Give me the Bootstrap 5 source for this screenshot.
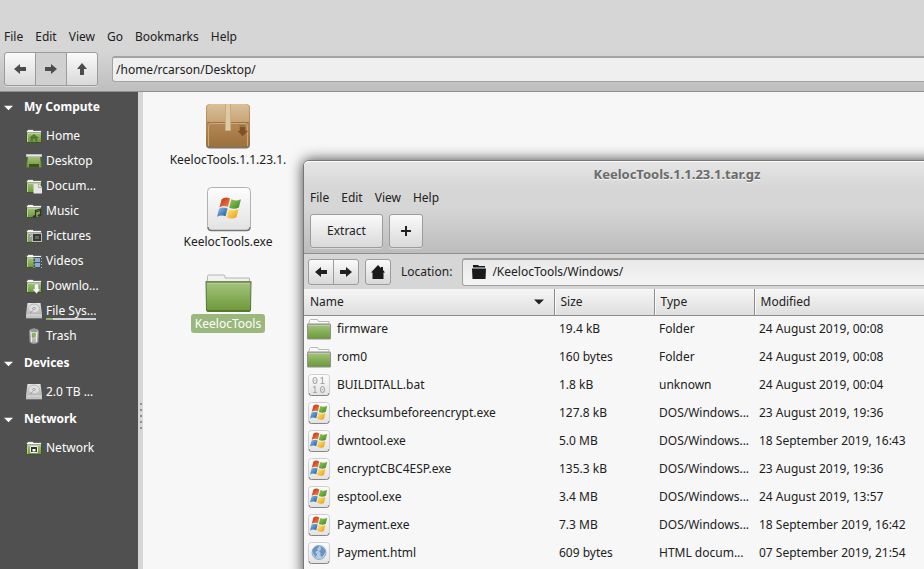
<!DOCTYPE html>
<html lang="en">
<head>
<meta charset="utf-8">
<meta name="viewport" content="width=device-width, initial-scale=1">
<title>Desktop - file manager</title>
<link href="https://cdn.jsdelivr.net/npm/bootstrap@5.3.0/dist/css/bootstrap.min.css" rel="stylesheet">
<style>
  body { font-family: "Noto Sans", sans-serif; font-size: 12px; line-height: 20px; color: #212121; background: #f7f7f7; }
  a, a:hover { color: inherit; text-decoration: none; }
  .fm-top { background: linear-gradient(#d6d6d6 55%, #bebebe); border-bottom: 1px solid #8f8f8f; padding: 27px 0 5px; }
  .menu-bar { gap: 12px; padding: 0 4px; }
  .fm-tools { padding: 5px 0 0 4px; gap: 14px; }
  .ui-btn { font-size: 12px; line-height: 20px; color: #212121; border: 1px solid #9c9c9c; border-radius: 3px; background: linear-gradient(#fafafa, #d9d9d9); padding: 0; box-shadow: 0 1px 0 #d9d9d9; }
  .ui-btn svg { display: block; margin: auto; }
  .btn-nav { width: 32px; height: 34px; color: #4c4c4c; }
  .btn-group > .ui-btn + .ui-btn { margin-left: -1px; }
  .btn-nav:disabled { background: #d0d0d0; opacity: 1; border-color: #9c9c9c; color: #4c4c4c; }
  .path-field { font-size: 12px; line-height: 20px; height: 26px; color: #212121; background: #efefef; border: 1px solid #a3a3a3; border-width: 2px 0 1px 1px; border-radius: 3px 0 0 3px; padding: 0 3px; }
  .side { width: 138px; background: #505050; color: #fff; }
  .side-head { height: 31px; font-size: 12px; gap: 11px; padding-left: 4px; }
  .side-item { height: 25px; gap: 4px; padding-left: 26px; }
  .usage { height: 2px; background: #d0d3d6; border-radius: 0; margin: -3px 0 1px; }
  .usage .progress-bar { background: #8fb06c; }
  .splitter { width: 5px; background: #d6d6d6; padding-bottom: 140px; gap: 4px; }
  .splitter i { width: 2px; height: 2px; background: #8e8e8e; }
  .icon-col { width: 170px; padding-top: 10px; gap: 15px; }
  .file-name { height: 19px; line-height: 19px; padding: 0 4px; border-radius: 3px; }
  .file-name.chosen { background: #9ab87c; color: #fff; }
  .arc-win { position: absolute; left: 303px; right: -127px; top: 160px; bottom: -10px; background: #f7f7f7; border: 1px solid #777; border-radius: 6px 6px 0 0; box-shadow: 0 0 14px rgba(0,0,0,.75); }
  .arc-top { background: linear-gradient(#e6e6e6, #d6d6d6 30%, #d6d6d6 50%, #bcbcbc); border-bottom: 1px solid #8f8f8f; border-radius: 5px 5px 0 0; box-shadow: inset 0 1px 0 #fafafa; padding: 2px 0 5px; }
  .arc-title { font-size: 13px; line-height: 22px; font-weight: 700; color: #6b6b6b; text-shadow: 0 1px 0 #f4f4f4; margin: 0; }
  .arc-menu { padding: 3px 6px 0; gap: 12px; }
  .arc-tools { padding: 6px 6px 0; gap: 6px; }
  .arc-tools .ui-btn { height: 34px; }
  .btn-extract { width: 73px; }
  .btn-add { width: 34px; }
  .arc-loc { background: #d6d6d6; padding: 4px 0 4px 4px; height: 35px; gap: 6px; }
  .arc-loc .ui-btn { width: 26px; height: 26px; }
  .arc-loc label { padding: 0 4px; }
  .loc-box { height: 28px; background: linear-gradient(#e8e8e8, #f5f5f5); border: 1px solid #a0a0a0; border-top-width: 2px; border-radius: 3px; padding-left: 8px; gap: 5px; }
  .loc-box input { font-size: 12px; line-height: 20px; color: #212121; background: none; border: 0; padding: 0; min-width: 0; }
  .listing { table-layout: fixed; width: 100%; }
  .listing th { height: 26px; padding: 0 6px; font-weight: 400; background: linear-gradient(#f6f6f6, #dedede); border-bottom: 1px solid #8c8c8c; }
  .listing th + th { box-shadow: inset 1px 0 0 #fafafa; }
  .listing th:not(:last-child) { border-right: 1px solid #8c8c8c; }
  .listing td { height: 28px; padding: 0 0 1px 5px; white-space: nowrap; }
  .listing td:first-child { padding-left: 3px; }
  .file-cell { gap: 6px; }
  .w-name { width: 250px; } .w-small { width: 100px; }
</style>
<script src="https://cdn.jsdelivr.net/npm/bootstrap@5.3.0/dist/js/bootstrap.bundle.min.js"></script>
</head>
<body class="vh-100 overflow-hidden">
<svg width="0" height="0" class="position-absolute" aria-hidden="true">
  <defs>
    <linearGradient id="gr" x1="0" y1="0" x2="0" y2="1"><stop offset="0" stop-color="#a4c47c"/><stop offset="1" stop-color="#6c9838"/></linearGradient>
    <linearGradient id="paper" x1="0" y1="0" x2="0" y2="1"><stop offset="0" stop-color="#fdfdfd"/><stop offset="1" stop-color="#e2e2e2"/></linearGradient>
    <linearGradient id="metal" x1="0" y1="0" x2="0" y2="1"><stop offset="0" stop-color="#e6e6e6"/><stop offset="1" stop-color="#a8a8a8"/></linearGradient>
    <linearGradient id="box" x1="0" y1="0" x2="0" y2="1"><stop offset="0" stop-color="#c49b69"/><stop offset="1" stop-color="#9c703b"/></linearGradient>
    <linearGradient id="lid" x1="0" y1="0" x2="0" y2="1"><stop offset="0" stop-color="#dcc09a"/><stop offset="1" stop-color="#c7a475"/></linearGradient>
    <linearGradient id="wr" x1="0" y1="0" x2="1" y2="1"><stop offset="0" stop-color="#c22a10"/><stop offset="1" stop-color="#f08a50"/></linearGradient>
    <linearGradient id="wg" x1="0" y1="0" x2="1" y2="1"><stop offset="0" stop-color="#9cc860"/><stop offset="1" stop-color="#3c8a1c"/></linearGradient>
    <linearGradient id="wb" x1="0" y1="0" x2="1" y2="1"><stop offset="0" stop-color="#8fc2ea"/><stop offset="1" stop-color="#1f5699"/></linearGradient>
    <linearGradient id="wy" x1="0" y1="0" x2="1" y2="1"><stop offset="0" stop-color="#fdea7c"/><stop offset="1" stop-color="#eb9a10"/></linearGradient>

    <symbol id="s-folder" viewBox="0 0 16 16"><path d="M.5 5V2.500h1l.5-1h5l.5 1h8V5z" fill="#f4f4f4" stroke="#3f3f3f" stroke-width=".6"/><path d="M.5 4.500h15V14.500H.5z" fill="url(#gr)" stroke="#42512f"/><path d="M1 4h14" stroke="#fff"/><path d="M1.500 6v8M2 5.500h13" stroke="#b8d498" fill="none"/></symbol>
    <symbol id="s-desktop" viewBox="0 0 16 16"><path d="M1.500 3h13l1 11.500H.5z" fill="url(#gr)" stroke="#55703a"/><path d="M0 1h16v3H0z" fill="#bdbdbd"/><path d="M1 2h14v1H1z" fill="#e9e9e9"/><path d="M3 11h10v3.500H3z" fill="#3d5123"/></symbol>
    <symbol id="s-disk" viewBox="0 0 16 16"><path d="M1.500 0h13L16 11v4H0v-4z" fill="url(#metal)"/><path d="M0 11.500h16V15H0z" fill="#c2c2c2"/><ellipse cx="8" cy="5.500" rx="5.500" ry="4.500" fill="#dedede" stroke="#b9b9b9"/><ellipse cx="8" cy="5.500" rx="1.500" ry="1" fill="none" stroke="#999" stroke-width=".8"/><path d="M4 10L7 7.500" stroke="#999"/><path d="M1 12h14" stroke="#ddd"/><path d="M0 15.500h16" stroke="#777"/></symbol>
    <symbol id="s-trash" viewBox="0 0 16 16"><path d="M3.500 2.500Q8-1 12.500 2.500L12 14.500Q8 17 4 14.500z" fill="url(#metal)" stroke="#888"/><ellipse cx="8" cy="2.500" rx="4" ry="1.700" fill="#999"/><path d="M5.500 5v9M10.500 5v9" stroke="#eee"/><path d="M6.500 9.500V6h2.500v2L7 8.500" stroke="#7fac48" stroke-width="1.500" fill="none"/></symbol>

    <symbol id="folder" viewBox="0 0 48 48"><path d="M3.500 14V10.500q0-1.500 1-1.500H20q1 0 1 1.500V12h24.500v4h-43z" fill="#f1f1f1" stroke="#b5b5b5"/><path d="M2 16h45l-.5 28q0 1.500-1.500 1.500H4q-1.500 0-1.500-1.500z" fill="url(#gr)" stroke="#59733b"/><path d="M1.500 15.500h46" stroke="#758a5c"/><path d="M3.500 17.500h42" stroke="#b5d08f"/><path d="M3 44.500h43" stroke="#557a2c"/></symbol>
    <symbol id="folder-m" viewBox="0 0 24 24"><path d="M2.500 5V3.500L3.500 2.500h7l1 2H22V7H1z" fill="#fafafa" stroke="#b9b9b9"/><path d="M.5 7.500h23V22H.5z" fill="url(#gr)" stroke="#909090"/><path d="M.5 7h23" stroke="#a9a9a9"/><path d="M1 8.500h22" stroke="#b9d296"/></symbol>
    <symbol id="flag" viewBox="0 0 24 22"><path d="M4.500 2Q8-.8 12.500 1.500L10.500 9.500Q6.500 7.500 2.300 10z" fill="url(#wr)"/><path d="M13.700 2.200Q18 4.500 23 2L21 10Q16.500 12.500 11.700 10.200z" fill="url(#wg)"/><path d="M2 11.200Q6 9 10.200 10.900L8.200 18.500Q4.500 16.800 0 19z" fill="url(#wb)"/><path d="M11.400 11.500Q16 13.800 20.700 11.400L18.700 19.500Q14 22 9.400 19.300z" fill="url(#wy)"/></symbol>
    <symbol id="exe" viewBox="0 0 48 48"><rect x="3.500" y="3.500" width="43" height="43" rx="4" fill="url(#paper)" stroke="#b2b2b2"/><path d="M4 43q0 3.500 3.500 3.500h35q3.500 0 3.500-3.500" fill="none" stroke="#777" stroke-width="1.500"/><use href="#flag" x="13" y="13" width="25" height="23"/></symbol>
    <symbol id="sheet" viewBox="0 0 24 24"><rect x="1.500" y="1.500" width="21" height="21" rx="3" fill="url(#paper)" stroke="#cfcfcf"/><path d="M2 20q0 2.500 2.500 2.500h15q2.500 0 2.500-2.500" fill="none" stroke="#858585"/></symbol>
    <symbol id="exe-m" viewBox="0 0 24 24"><use href="#sheet"/><use href="#flag" x="3" y="3" width="18" height="17"/></symbol>
    <symbol id="bin-m" viewBox="0 0 24 24"><use href="#sheet"/><g fill="none" stroke="#aaa" stroke-width="1.100"><ellipse cx="8" cy="7.500" rx="2" ry="3"/><path d="M8 7v1M13.500 5.500L15.500 4.500v6M13.500 10.500h4M6 14.500L8 13.500v6M6 19.500h4"/><ellipse cx="15.500" cy="16.500" rx="2" ry="3"/><path d="M15.500 16v1"/></g></symbol>
    <symbol id="web-m" viewBox="0 0 24 24"><use href="#sheet"/><circle cx="12" cy="11.500" r="7" fill="#b4cbe5" stroke="#8eabcd"/><path d="M6 8q2-3 5-3.500l1 2-2 1 1 2-3 1.500 2 2-1 3.500-2-3-1.500-2.500zM13.500 5.500q4 1 5 5l-1.500 3-2 2.500-1.500-1V12l-1.500-2 2-1.500z" fill="#6b93c0"/></symbol>
    <symbol id="package" viewBox="0 0 48 48"><rect x="2" y="2.500" width="44" height="44" rx="4" fill="#78736c"/><rect x="2" y="2" width="44" height="43" rx="4" fill="url(#box)"/><path d="M3 20V6q0-4 4-4h34q4 0 4 4v14z" fill="url(#lid)"/><path d="M3 20.500h42" stroke="#9c7446"/><path d="M4.500 44V24q0-2.500 2.500-2.500h34q2.500 0 2.500 2.500v20" fill="none" stroke="#cba97c"/><path d="M21 2h6v26.500h-6z" fill="#e0c9a4"/><path d="M21.500 2v26.500h5V2" fill="none" stroke="#c8ad84"/><path d="M35 23.500h6M36 25h5v4h2.500L38.500 34 34 29h2z" fill="#80502a" stroke="#80502a" stroke-width=".5"/></symbol>
    <symbol id="left" viewBox="0 0 12 12"><path d="M0 6l6-5v3h6v4H6v3z" fill="currentColor"/></symbol>
    <symbol id="right" viewBox="0 0 12 12"><path d="M12 6L6 1v3H0v4h6v3z" fill="currentColor"/></symbol>
    <symbol id="up" viewBox="0 0 12 12"><path d="M6 0l5 6H8v6H4V6H1z" fill="currentColor"/></symbol>
    <symbol id="tri" viewBox="0 0 10 6"><path d="M0 .5h10L5 5.500z" fill="currentColor"/></symbol>
  </defs>
</svg>

<div class="d-flex flex-column h-100 position-relative overflow-hidden">
  <header class="fm-top">
    <nav class="menu-bar d-flex" aria-label="File manager menu">
      <a href="#">File</a><a href="#">Edit</a><a href="#">View</a><a href="#">Go</a><a href="#">Bookmarks</a><a href="#">Help</a>
    </nav>
    <div class="fm-tools d-flex align-items-center">
      <div class="btn-group">
        <button type="button" class="btn ui-btn btn-nav" aria-label="Back"><svg width="12" height="12"><use href="#left"/></svg></button>
        <button type="button" class="btn ui-btn btn-nav" aria-label="Forward" disabled><svg width="12" height="12"><use href="#right"/></svg></button>
        <button type="button" class="btn ui-btn btn-nav" aria-label="Up"><svg width="12" height="12"><use href="#up"/></svg></button>
      </div>
      <input type="text" class="path-field flex-grow-1" aria-label="Path" value="/home/rcarson/Desktop/">
    </div>
  </header>

  <div class="d-flex flex-grow-1">
    <aside class="side flex-shrink-0">
      <h2 class="side-head d-flex align-items-center fw-bold m-0"><svg width="9" height="6"><use href="#tri"/></svg>My Compute</h2>
      <a href="#" class="side-item d-flex align-items-center"><svg width="16" height="16" viewBox="0 0 16 16"><use href="#s-folder"/><path d="M8 6l5 4h-1.500v3.500H9V11H7v2.500H4.500V10H3z" fill="#557a33"/></svg>Home</a>
      <a href="#" class="side-item d-flex align-items-center"><svg width="16" height="16"><use href="#s-desktop"/></svg>Desktop</a>
      <a href="#" class="side-item d-flex align-items-center"><svg width="16" height="16" viewBox="0 0 16 16"><use href="#s-folder"/><path d="M7.500 6H13l3 3v6.500H7.500z" fill="#e6e6e6"/><path d="M12.500 6v3.500H16" fill="none" stroke="#aaa"/></svg>Docum...</a>
      <a href="#" class="side-item d-flex align-items-center"><svg width="16" height="16" viewBox="0 0 16 16"><use href="#s-folder"/><path d="M9.500 13V7.500l5-1.500v6M9.500 9l5-1.500" fill="none" stroke="#333" stroke-width="1.200"/><ellipse cx="8.500" cy="13.500" rx="1.800" ry="1.300" fill="#333"/><ellipse cx="13.500" cy="12.500" rx="1.800" ry="1.300" fill="#333"/></svg>Music</a>
      <a href="#" class="side-item d-flex align-items-center"><svg width="16" height="16" viewBox="0 0 16 16"><use href="#s-folder"/><path d="M3 6h5v7H3z" fill="#999"/><path d="M4 9l3-3" stroke="#ddd"/><rect x="6.500" y="5.500" width="9" height="8" fill="#383838" stroke="#bbb"/><path d="M9 8h4v3H9z" fill="#596f57"/></svg>Pictures</a>
      <a href="#" class="side-item d-flex align-items-center"><svg width="16" height="16" viewBox="0 0 16 16"><use href="#s-folder"/><path d="M7.500 4H16v11H7.500z" fill="#4a4f54"/><path d="M9 5h5v4H9zM9 10h5v4H9z" fill="#83aed0"/><path d="M8 5v10M15.500 5v10" stroke="#bbb" stroke-dasharray="1 2"/></svg>Videos</a>
      <a href="#" class="side-item d-flex align-items-center"><svg width="16" height="16" viewBox="0 0 16 16"><use href="#s-folder"/><path d="M8.500 6h4v5h2l-4 4.500-4-4.500h2z" fill="#f7f7f7" stroke="#999" stroke-width=".5"/></svg>Downlo...</a>
      <a href="#" class="side-item d-flex align-items-center"><svg width="16" height="16"><use href="#s-disk"/></svg><span class="d-inline-block">File Sys...<span class="progress usage" role="progressbar" aria-label="Disk usage" aria-valuenow="13" aria-valuemin="0" aria-valuemax="100"><span class="progress-bar" style="width: 13%"></span></span></span></a>
      <a href="#" class="side-item d-flex align-items-center"><svg width="16" height="16"><use href="#s-trash"/></svg>Trash</a>
      <h2 class="side-head d-flex align-items-center fw-bold m-0"><svg width="9" height="6"><use href="#tri"/></svg>Devices</h2>
      <a href="#" class="side-item d-flex align-items-center"><svg width="16" height="16"><use href="#s-disk"/></svg>2.0 TB ...</a>
      <h2 class="side-head d-flex align-items-center fw-bold m-0"><svg width="9" height="6"><use href="#tri"/></svg>Network</h2>
      <a href="#" class="side-item d-flex align-items-center"><svg width="16" height="16" viewBox="0 0 16 16"><use href="#s-folder"/><path d="M4.500 6.500h7v6h-7z" fill="#333" stroke="#eee"/><path d="M6.500 9h3v2.500h-3z" fill="#fff"/></svg>Network</a>
    </aside>
    <div class="splitter flex-shrink-0 d-flex flex-column align-items-center justify-content-end"><i></i><i></i><i></i><i></i><i></i></div>
    <main class="flex-grow-1">
      <div class="icon-col d-flex flex-column align-items-center">
        <a href="#" class="d-flex flex-column align-items-center"><svg width="48" height="48"><use href="#package"/></svg><span class="file-name">KeelocTools.1.1.23.1.</span></a>
        <a href="#" class="d-flex flex-column align-items-center"><svg width="48" height="48"><use href="#exe"/></svg><span class="file-name">KeelocTools.exe</span></a>
        <a href="#" class="d-flex flex-column align-items-center"><svg width="48" height="48"><use href="#folder"/></svg><span class="file-name chosen">KeelocTools</span></a>
      </div>
    </main>
  </div>

  <section class="arc-win" aria-labelledby="arc-title">
    <div class="arc-top">
      <h1 class="arc-title text-center" id="arc-title">KeelocTools.1.1.23.1.tar.gz</h1>
      <nav class="arc-menu d-flex" aria-label="Archive menu"><a href="#">File</a><a href="#">Edit</a><a href="#">View</a><a href="#">Help</a></nav>
      <div class="arc-tools d-flex">
        <button type="button" class="btn ui-btn btn-extract">Extract</button>
        <button type="button" class="btn ui-btn btn-add" aria-label="Add files"><svg width="10" height="10" viewBox="0 0 10 10"><path d="M5 0v10M0 5h10" stroke="#212121" stroke-width="2"/></svg></button>
      </div>
    </div>
    <div class="arc-loc d-flex align-items-center">
      <div class="btn-group">
        <button type="button" class="btn ui-btn" aria-label="Back"><svg width="12" height="12"><use href="#left"/></svg></button>
        <button type="button" class="btn ui-btn" aria-label="Forward"><svg width="12" height="12"><use href="#right"/></svg></button>
      </div>
      <button type="button" class="btn ui-btn" aria-label="Home"><svg width="14" height="14" viewBox="0 0 14 14"><path d="M7 0l3 3V2h2v3l2 2.500h-1.500V14h-11V7.500H0z" fill="#1a1a1a"/></svg></button>
      <label for="loc">Location:</label>
      <div class="loc-box d-flex align-items-center flex-grow-1">
        <svg width="16" height="16" viewBox="0 0 16 16"><path d="M2 2.500V1h5l1 1h6v1.500H2zM1 4.500h14l-.5 10.500h-13z" fill="#1a1a1a"/></svg>
        <input type="text" id="loc" class="flex-grow-1" value="/KeelocTools/Windows/">
      </div>
    </div>
    <table class="listing">
      <colgroup><col class="w-name"><col class="w-small"><col class="w-small"><col></colgroup>
      <thead><tr><th scope="col"><span class="d-flex justify-content-between align-items-center pe-1">Name<svg width="10" height="6"><use href="#tri"/></svg></span></th><th scope="col">Size</th><th scope="col">Type</th><th scope="col">Modified</th></tr></thead>
      <tbody>
        <tr><td><span class="file-cell d-flex align-items-center"><svg width="24" height="24"><use href="#folder-m"/></svg>firmware</span></td><td>19.4 kB</td><td>Folder</td><td>24 August 2019, 00:08</td></tr>
        <tr><td><span class="file-cell d-flex align-items-center"><svg width="24" height="24"><use href="#folder-m"/></svg>rom0</span></td><td>160 bytes</td><td>Folder</td><td>24 August 2019, 00:08</td></tr>
        <tr><td><span class="file-cell d-flex align-items-center"><svg width="24" height="24"><use href="#bin-m"/></svg>BUILDITALL.bat</span></td><td>1.8 kB</td><td>unknown</td><td>24 August 2019, 00:04</td></tr>
        <tr><td><span class="file-cell d-flex align-items-center"><svg width="24" height="24"><use href="#exe-m"/></svg>checksumbeforeencrypt.exe</span></td><td>127.8 kB</td><td>DOS/Windows...</td><td>23 August 2019, 19:36</td></tr>
        <tr><td><span class="file-cell d-flex align-items-center"><svg width="24" height="24"><use href="#exe-m"/></svg>dwntool.exe</span></td><td>5.0 MB</td><td>DOS/Windows...</td><td>18 September 2019, 16:43</td></tr>
        <tr><td><span class="file-cell d-flex align-items-center"><svg width="24" height="24"><use href="#exe-m"/></svg>encryptCBC4ESP.exe</span></td><td>135.3 kB</td><td>DOS/Windows...</td><td>23 August 2019, 19:36</td></tr>
        <tr><td><span class="file-cell d-flex align-items-center"><svg width="24" height="24"><use href="#exe-m"/></svg>esptool.exe</span></td><td>3.4 MB</td><td>DOS/Windows...</td><td>24 August 2019, 13:57</td></tr>
        <tr><td><span class="file-cell d-flex align-items-center"><svg width="24" height="24"><use href="#exe-m"/></svg>Payment.exe</span></td><td>7.3 MB</td><td>DOS/Windows...</td><td>18 September 2019, 16:42</td></tr>
        <tr><td><span class="file-cell d-flex align-items-center"><svg width="24" height="24"><use href="#web-m"/></svg>Payment.html</span></td><td>609 bytes</td><td>HTML docum...</td><td>07 September 2019, 21:54</td></tr>
      </tbody>
    </table>
  </section>
</div>
</body>
</html>
